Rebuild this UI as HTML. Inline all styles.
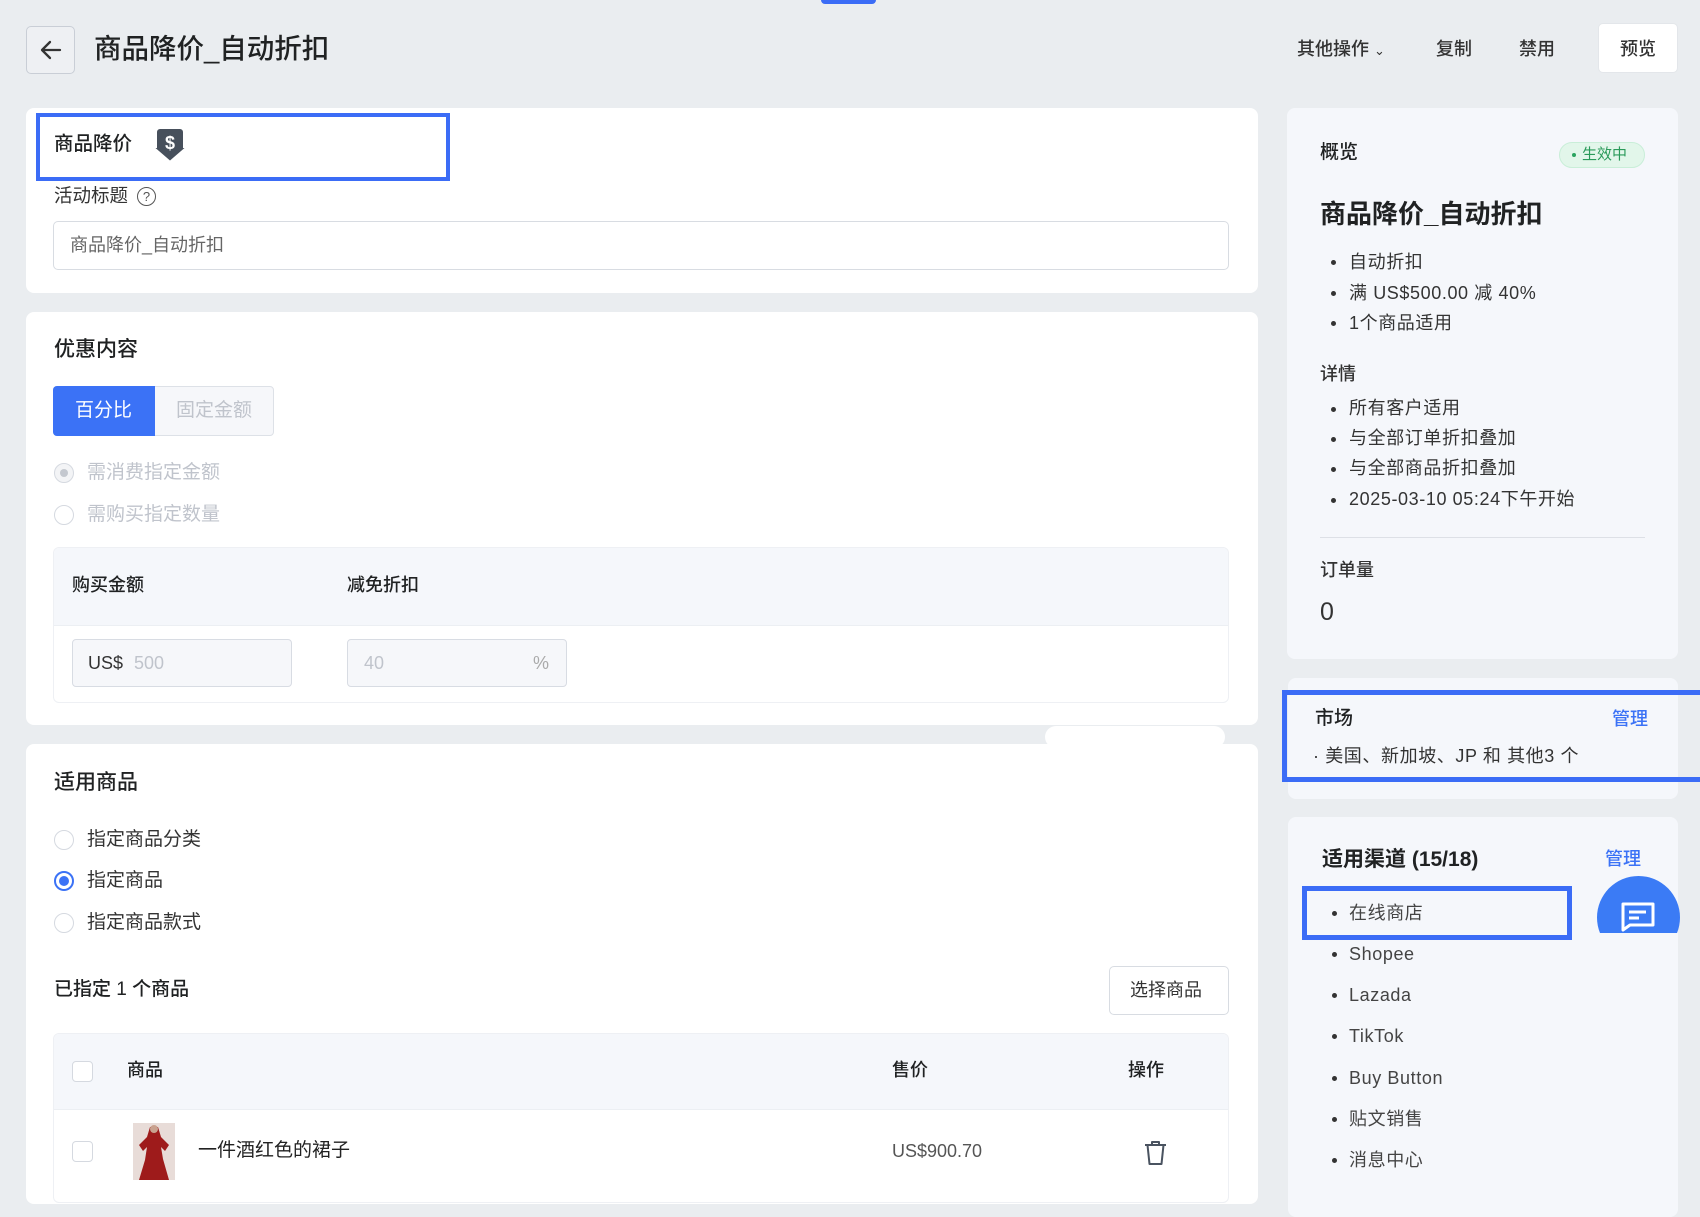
<!DOCTYPE html>
<html><head><meta charset="utf-8">
<style>
*{box-sizing:border-box;margin:0;padding:0}
body{width:1700px;height:1192px;overflow:hidden;background:#eaedf0;font-family:"Liberation Sans","Noto Sans CJK SC",sans-serif;color:#202223;position:relative}
.a{position:absolute}
.t{position:absolute;white-space:nowrap;line-height:1}
.card{position:absolute;background:#fff;border-radius:8px}
.rc{position:absolute;background:#f5f7fb;border-radius:8px}
.radio{position:absolute;width:20px;height:20px;border:1.5px solid #d5d9e0;border-radius:50%;background:#fff}
.cb{position:absolute;width:21px;height:21px;border:1.5px solid #d5d9e0;border-radius:4px;background:#fff}
.dot{position:absolute;width:5px;height:5px;border-radius:50%;background:#333}
.r{letter-spacing:0.6px}
</style></head><body>
<div class="a" style="left:821px;top:-6px;width:55px;height:10px;background:#3b6cf6;border-radius:4px"></div>

<!-- header -->
<div class="a" style="left:26px;top:26px;width:49px;height:48px;border:1px solid #c9ced6;border-radius:5px;background:#eef0f3"></div>
<svg class="a" style="left:38px;top:38px" width="26" height="24" viewBox="0 0 26 24"><path d="M22 12H5M12 4L4 12l8 8" fill="none" stroke="#333" stroke-width="2.3" stroke-linecap="round" stroke-linejoin="round"/></svg>
<div class="t" style="left:94px;top:35px;font-size:27.5px;font-weight:500">商品降价_自动折扣</div>
<div class="t" style="left:1297px;top:40px;font-size:18px;font-weight:500;color:#333">其他操作 <span style="font-size:13px">⌄</span></div>
<div class="t" style="left:1436px;top:40px;font-size:18px;font-weight:500;color:#333">复制</div>
<div class="t" style="left:1519px;top:40px;font-size:18px;font-weight:500;color:#333">禁用</div>
<div class="a" style="left:1598px;top:23px;width:80px;height:50px;background:#fff;border-radius:5px;border:1px solid #e3e6ea"></div>
<div class="t" style="left:1620px;top:40px;font-size:18px;font-weight:500;color:#333">预览</div>

<!-- card 1 -->
<div class="card" style="left:26px;top:108px;width:1232px;height:185px"></div>
<div class="a" style="left:36px;top:113px;width:414px;height:68px;border:4px solid #3b6cf6"></div>
<div class="t" style="left:54px;top:135px;font-size:19.5px;font-weight:500">商品降价</div>
<svg class="a" style="left:155px;top:129px" width="30" height="32" viewBox="0 0 30 32"><path d="M5 0h20a3 3 0 0 1 3 3v16h1.5L15 31.5 0.5 19H2V3a3 3 0 0 1 3-3z" fill="#47505c"/><text x="15" y="20" font-size="18" font-weight="bold" fill="#fff" text-anchor="middle" font-family="Liberation Sans">$</text></svg>
<div class="t" style="left:54px;top:187px;font-size:18.5px;color:#333">活动标题</div>
<div class="a" style="left:137px;top:187px;width:19px;height:19px;border:1.3px solid #555;border-radius:50%;font-size:13px;text-align:center;line-height:17px;color:#555">?</div>
<div class="a" style="left:53px;top:221px;width:1176px;height:49px;border:1px solid #d8dce2;border-radius:5px"></div>
<div class="t" style="left:70px;top:236px;font-size:18px;color:#666">商品降价_自动折扣</div>

<!-- card 2 -->
<div class="card" style="left:26px;top:312px;width:1232px;height:413px"></div>
<div class="t" style="left:54px;top:339px;font-size:21px;font-weight:500">优惠内容</div>
<div class="a" style="left:53px;top:386px;width:221px;height:50px;border:1px solid #dde1e7;border-radius:4px;background:#f6f7fa"></div>
<div class="a" style="left:53px;top:386px;width:102px;height:50px;border-radius:4px 0 0 4px;background:#3b72f6"></div>
<div class="t" style="left:75px;top:401px;font-size:19px;color:#fff">百分比</div>
<div class="t" style="left:176px;top:401px;font-size:19px;color:#c0c4cc">固定金额</div>
<div class="radio" style="left:54px;top:463px;background:#f3f4f6"></div>
<div class="a" style="left:60px;top:469px;width:8px;height:8px;border-radius:50%;background:#c4c8cf"></div>
<div class="t" style="left:87px;top:463px;font-size:19px;color:#c0c4cc">需消费指定金额</div>
<div class="radio" style="left:54px;top:505px"></div>
<div class="t" style="left:87px;top:505px;font-size:19px;color:#c0c4cc">需购买指定数量</div>
<div class="a" style="left:53px;top:547px;width:1176px;height:156px;border:1px solid #eef0f4;border-radius:6px;overflow:hidden"><div style="height:78px;background:#f5f7fb;border-bottom:1px solid #eceff3"></div></div>
<div class="t" style="left:72px;top:576px;font-size:18px;font-weight:500">购买金额</div>
<div class="t" style="left:347px;top:576px;font-size:18px;font-weight:500">减免折扣</div>
<div class="a" style="left:72px;top:639px;width:220px;height:48px;border:1px solid #d8dce3;border-radius:4px;background:#f6f7fa"></div>
<div class="t" style="left:88px;top:654px;font-size:18px;color:#333">US$ <span style="color:#c0c4cc;margin-left:6px">500</span></div>
<div class="a" style="left:347px;top:639px;width:220px;height:48px;border:1px solid #d8dce3;border-radius:4px;background:#f6f7fa"></div>
<div class="t" style="left:364px;top:654px;font-size:18px;color:#c0c4cc">40</div>
<div class="t" style="left:533px;top:654px;font-size:18px;color:#aaa">%</div>

<!-- card 3 -->
<div class="card" style="left:26px;top:744px;width:1232px;height:460px"></div>
<div class="a" style="left:1045px;top:726px;width:180px;height:22px;background:#fff;border-radius:11px"></div>
<div class="t" style="left:54px;top:772px;font-size:21px;font-weight:500">适用商品</div>
<div class="radio" style="left:54px;top:830px"></div>
<div class="t" style="left:87px;top:830px;font-size:19px;color:#333">指定商品分类</div>
<div class="radio" style="left:54px;top:871px;border:2px solid #3b72f6"></div>
<div class="a" style="left:59px;top:876px;width:10px;height:10px;border-radius:50%;background:#3b72f6"></div>
<div class="t" style="left:87px;top:871px;font-size:19px;color:#333">指定商品</div>
<div class="radio" style="left:54px;top:913px"></div>
<div class="t" style="left:87px;top:913px;font-size:19px;color:#333">指定商品款式</div>
<div class="t" style="left:54px;top:980px;font-size:19px;font-weight:500">已指定 1 个商品</div>
<div class="a" style="left:1109px;top:966px;width:120px;height:49px;border:1px solid #d8dce2;border-radius:5px;background:#fff"></div>
<div class="t" style="left:1130px;top:981px;font-size:18px;color:#333">选择商品</div>
<div class="a" style="left:53px;top:1033px;width:1176px;height:170px;border:1px solid #eef0f4;border-radius:6px;overflow:hidden"><div style="height:76px;background:#f5f7fb;border-bottom:1px solid #eceff3"></div></div>
<div class="cb" style="left:72px;top:1061px"></div>
<div class="t" style="left:127px;top:1061px;font-size:18px;font-weight:500">商品</div>
<div class="t" style="left:892px;top:1061px;font-size:18px;font-weight:500">售价</div>
<div class="t" style="left:1128px;top:1061px;font-size:18px;font-weight:500">操作</div>
<div class="cb" style="left:72px;top:1141px"></div>
<div class="a" style="left:133px;top:1123px;width:42px;height:57px;background:#e8dcd8"></div>
<svg class="a" style="left:133px;top:1123px" width="42" height="57" viewBox="0 0 42 57"><path d="M17 4h8l3 10 8 8-4 6-4-4 2 12 6 21H6l6-20 2-13-4 4-4-6 8-8z" fill="#9e1b1b"/><circle cx="21" cy="6" r="4" fill="#c9a28f"/></svg>
<div class="t" style="left:198px;top:1141px;font-size:19px;color:#222">一件酒红色的裙子</div>
<div class="t" style="left:892px;top:1142px;font-size:18px;color:#555">US$900.70</div>
<svg class="a" style="left:1143px;top:1139px" width="25" height="27" viewBox="0 0 25 27"><path d="M2 6h21M9 6V3h7v3M4.5 6l2 19h12l2-19" fill="none" stroke="#4a5360" stroke-width="2" stroke-linejoin="round"/></svg>

<!-- right: overview -->
<div class="rc" style="left:1287px;top:108px;width:391px;height:551px"></div>
<div class="t" style="left:1320px;top:143px;font-size:19px;font-weight:500">概览</div>
<div class="a" style="left:1559px;top:142px;width:86px;height:26px;border-radius:13px;background:#e2f6ea;border:1px solid #c9eed8"></div>
<div class="a" style="left:1572px;top:153px;width:4px;height:4px;border-radius:50%;background:#2aa35f"></div>
<div class="t" style="left:1582px;top:147px;font-size:15px;color:#2a9a5a">生效中</div>
<div class="t" style="left:1320px;top:201px;font-size:26px;font-weight:600">商品降价_自动折扣</div>
<div class="dot" style="left:1331px;top:260px"></div><div class="t r" style="left:1349px;top:253px;font-size:18px;color:#333">自动折扣</div>
<div class="dot" style="left:1331px;top:291px"></div><div class="t r" style="left:1349px;top:284px;font-size:18px;color:#333">满 US$500.00 减 40%</div>
<div class="dot" style="left:1331px;top:321px"></div><div class="t r" style="left:1349px;top:314px;font-size:18px;color:#333">1个商品适用</div>
<div class="t" style="left:1320px;top:365px;font-size:18px;font-weight:500;color:#333">详情</div>
<div class="dot" style="left:1331px;top:407px"></div><div class="t r" style="left:1349px;top:399px;font-size:18px;color:#333">所有客户适用</div>
<div class="dot" style="left:1331px;top:437px"></div><div class="t r" style="left:1349px;top:429px;font-size:18px;color:#333">与全部订单折扣叠加</div>
<div class="dot" style="left:1331px;top:467px"></div><div class="t r" style="left:1349px;top:459px;font-size:18px;color:#333">与全部商品折扣叠加</div>
<div class="dot" style="left:1331px;top:498px"></div><div class="t r" style="left:1349px;top:490px;font-size:18px;color:#333">2025-03-10 05:24下午开始</div>
<div class="a" style="left:1320px;top:537px;width:325px;height:1px;background:#dde0e6"></div>
<div class="t" style="left:1320px;top:561px;font-size:18px;font-weight:500;color:#333">订单量</div>
<div class="t" style="left:1320px;top:600px;font-size:25px;color:#333">0</div>

<!-- market -->
<div class="rc" style="left:1288px;top:678px;width:390px;height:121px"></div>
<div class="a" style="left:1282px;top:690px;width:430px;height:92px;border:5px solid #3b6cf6"></div>
<div class="t" style="left:1315px;top:709px;font-size:19px;font-weight:500">市场</div>
<div class="t" style="left:1612px;top:710px;font-size:18px;font-weight:500;color:#3b72f6">管理</div>
<div class="t r" style="left:1313px;top:747px;font-size:18px;color:#333">· 美国、新加坡、JP 和 其他3 个</div>

<!-- channels -->
<div class="rc" style="left:1288px;top:817px;width:390px;height:400px"></div>
<div class="t" style="left:1322px;top:849px;font-size:21px;font-weight:600">适用渠道 (15/18)</div>
<div class="t" style="left:1605px;top:850px;font-size:18px;font-weight:500;color:#3b72f6">管理</div>
<div class="a" style="left:1302px;top:886px;width:270px;height:54px;border:5px solid #3b6cf6"></div>
<div class="dot" style="left:1332px;top:911px"></div><div class="t r" style="left:1349px;top:904px;font-size:18px;color:#444">在线商店</div>
<div class="dot" style="left:1332px;top:952px"></div><div class="t r" style="left:1349px;top:945px;font-size:18px;color:#444">Shopee</div>
<div class="dot" style="left:1332px;top:993px"></div><div class="t r" style="left:1349px;top:986px;font-size:18px;color:#444">Lazada</div>
<div class="dot" style="left:1332px;top:1034px"></div><div class="t r" style="left:1349px;top:1027px;font-size:18px;color:#444">TikTok</div>
<div class="dot" style="left:1332px;top:1076px"></div><div class="t r" style="left:1349px;top:1069px;font-size:18px;color:#444">Buy Button</div>
<div class="dot" style="left:1332px;top:1117px"></div><div class="t r" style="left:1349px;top:1110px;font-size:18px;color:#444">贴文销售</div>
<div class="dot" style="left:1332px;top:1158px"></div><div class="t r" style="left:1349px;top:1151px;font-size:18px;color:#444">消息中心</div>
<div class="a" style="left:1597px;top:876px;width:83px;height:57px;overflow:hidden"><div style="width:83px;height:83px;border-radius:50%;background:#3b7bf5"></div></div>
<svg class="a" style="left:1620px;top:902px" width="36" height="30" viewBox="0 0 36 30"><path d="M3 2h30v21H10l-7 5z" fill="none" stroke="#fff" stroke-width="3" stroke-linejoin="round"/><path d="M9 10h17M9 16h10" stroke="#fff" stroke-width="3"/></svg>
</body></html>
